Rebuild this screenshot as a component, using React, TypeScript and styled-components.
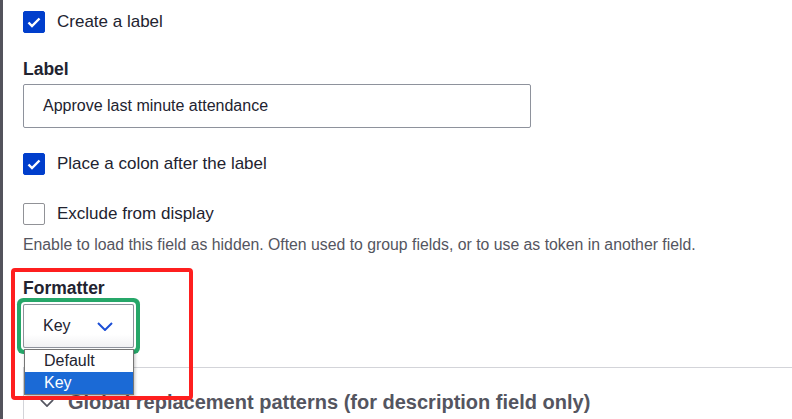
import React from "react";
import styled, { createGlobalStyle } from "styled-components";

const GlobalStyle = createGlobalStyle`
	html, body {
		margin: 0;
		padding: 0;
		background: #ffffff;
		overflow: hidden;
	}
	body {
		font-family: "Liberation Sans", Arial, sans-serif;
		color: #222330;
	}
`;

const PAGE = styled.div`
	display: flex;
	width: 792px;
	height: 419px;
	overflow: hidden;
`;

const STRIP = styled.div`
	width: 3px;
	flex: none;
	background: #53535c;
`;

const PANEL = styled.div`
	flex: 1;
	display: flex;
	flex-direction: column;
	padding: 11px 0 0 20px;
	min-width: 0;
	& > * {
		flex: none;
	}
`;

const CHECK_ROW = styled.label`
	display: flex;
	align-items: center;
	gap: 12px;
	height: 22px;
	font-size: 17px;
	margin-top: ${(props) => props.theme.top || 0}px;
`;

const BOX = styled.span`
	width: 22px;
	height: 22px;
	box-sizing: border-box;
	border-radius: 2px;
	display: flex;
	align-items: center;
	justify-content: center;
	background: ${(props) => (props.theme.on ? "#003ecc" : "#ffffff")};
	border: 1px solid ${(props) => (props.theme.on ? "#003ecc" : "#919297")};
`;

const HEADING = styled.div`
	font-size: 17.5px;
	font-weight: 700;
	line-height: 20px;
	margin-top: ${(props) => props.theme.top || 0}px;
`;

const TEXT_INPUT = styled.div`
	box-sizing: border-box;
	width: 508px;
	height: 44px;
	margin-top: 5px;
	border: 1px solid #8e929c;
	border-radius: 2px;
	padding: 0 19px;
	display: flex;
	align-items: center;
	font-size: 16px;
`;

const DESCRIPTION = styled.div`
	margin-top: 10px;
	font-size: 15.8px;
	line-height: 20px;
	color: #545560;
	white-space: nowrap;
`;

const FORMATTER = styled.div`
	position: relative;
	margin-top: 23px;
`;

const RED_FRAME = styled.div`
	position: absolute;
	top: -10px;
	left: -12px;
	width: 182px;
	height: 132px;
	box-sizing: border-box;
	border: 4px solid #fe1f1f;
	border-radius: 4px;
	z-index: 3;
	pointer-events: none;
`;

const SELECT_WRAP = styled.div`
	position: relative;
	width: 111px;
	margin-top: 6px;
`;

const SELECT = styled.div`
	box-sizing: border-box;
	height: 44px;
	border: 1px solid #8e929c;
	border-radius: 2px;
	padding: 0 20px 0 19px;
	display: flex;
	align-items: center;
	justify-content: space-between;
	font-size: 16px;
	background: linear-gradient(#ffffff 70%, #f1f1f3);
	box-shadow: 0 0 0 2px #ffffff, 0 0 0 6px #26a769;
`;

const LISTBOX = styled.ul`
	position: absolute;
	top: 45px;
	left: 1px;
	width: 110px;
	box-sizing: border-box;
	margin: 0;
	padding: 0;
	list-style: none;
	background: #ffffff;
	border: 1px solid #767676;
	box-shadow: 1px 2px 3px rgba(0, 0, 0, 0.25);
	z-index: 2;
`;

const OPTION = styled.li`
	height: 22px;
	line-height: 22px;
	padding-left: 19px;
	font-size: 16px;
	background: ${(props) => (props.theme.active ? "#1b6ad6" : "#ffffff")};
	color: ${(props) => (props.theme.active ? "#ffffff" : "#222330")};
`;

const DETAILS = styled.div`
	margin-top: 19px;
	width: 800px;
	height: 80px;
	border-top: 1px solid #d3d4d9;
	border-left: 1px solid #d3d4d9;
`;

const SUMMARY = styled.div`
	display: flex;
	align-items: center;
	gap: 14px;
	padding: 23px 0 0 16px;
	font-size: 20px;
	font-weight: 700;
	color: #545560;
	white-space: nowrap;
`;

function Check({ on }: { on: boolean }) {
	return (
		<BOX theme={{ on }}>
			{on && (
				<svg width="14" height="11" viewBox="0 0 14 11">
					<path
						d="M1.5 5.5 L5 9 L12.5 1.5"
						fill="none"
						stroke="#ffffff"
						strokeWidth="2.4"
					/>
				</svg>
			)}
		</BOX>
	);
}

function Chevron({ color, w, h }: { color: string; w: number; h: number }) {
	return (
		<svg width={w} height={h} viewBox="0 0 16 9">
			<path d="M1 1 L8 8 L15 1" fill="none" stroke={color} strokeWidth="2" />
		</svg>
	);
}

export default function App() {
	return (
		<>
			<GlobalStyle />
			<PAGE>
				<STRIP />
				<PANEL>
					<CHECK_ROW theme={{}}>
						<Check on={true} />
						Create a label
					</CHECK_ROW>
					<HEADING theme={{ top: 26 }}>Label</HEADING>
					<TEXT_INPUT>Approve last minute attendance</TEXT_INPUT>
					<CHECK_ROW theme={{ top: 25 }}>
						<Check on={true} />
						Place a colon after the label
					</CHECK_ROW>
					<CHECK_ROW theme={{ top: 28 }}>
						<Check on={false} />
						Exclude from display
					</CHECK_ROW>
					<DESCRIPTION>
						Enable to load this field as hidden. Often used to group fields, or
						to use as token in another field.
					</DESCRIPTION>
					<FORMATTER>
						<RED_FRAME />
						<HEADING theme={{}}>Formatter</HEADING>
						<SELECT_WRAP>
							<SELECT>
								Key
								<Chevron color="#1c4fd6" w={16} h={9} />
							</SELECT>
							<LISTBOX>
								<OPTION theme={{}}>Default</OPTION>
								<OPTION theme={{ active: true }}>Key</OPTION>
							</LISTBOX>
						</SELECT_WRAP>
					</FORMATTER>
					<DETAILS>
						<SUMMARY>
							<Chevron color="#545560" w={14} h={8} />
							Global replacement patterns (for description field only)
						</SUMMARY>
					</DETAILS>
				</PANEL>
			</PAGE>
		</>
	);
}
